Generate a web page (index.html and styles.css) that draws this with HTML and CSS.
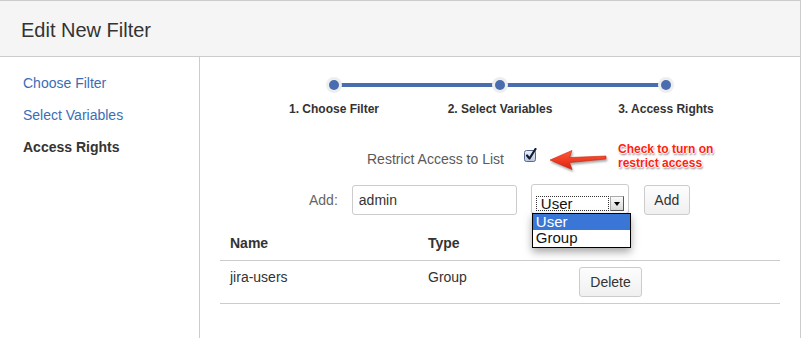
FILE: index.html
```html
<!DOCTYPE html>
<html lang="en">
<head>
    <meta charset="UTF-8">
    <title>Edit New Filter</title>
    <link rel="stylesheet" href="styles.css">
</head>
<body>
    <div class="dialog">
        <div class="dialog-header">
            <h2>Edit New Filter</h2>
        </div>
        <div class="dialog-body">
            <ul class="nav">
                <li><a href="#">Choose Filter</a></li>
                <li><a href="#">Select Variables</a></li>
                <li class="active">Access Rights</li>
            </ul>
            <div class="content">
                <ol class="tracker">
                    <li class="first"><span class="dot"></span><span class="step">1. Choose Filter</span></li>
                    <li><span class="dot"></span><span class="step">2. Select Variables</span></li>
                    <li class="last"><span class="dot"></span><span class="step">3. Access Rights</span></li>
                </ol>

                <div class="restrict-row">
                    <label for="restrict">Restrict Access to List</label>
                    <span class="checkbox" id="restrict">
                        <svg width="13" height="14" viewBox="0 0 13 14">
                            <defs>
                                <linearGradient id="cbg" x1="0" y1="0" x2="0" y2="1">
                                    <stop offset="0" stop-color="#eef2f9"/>
                                    <stop offset="1" stop-color="#b9c6de"/>
                                </linearGradient>
                            </defs>
                            <rect x="0.5" y="2.5" width="11" height="11" rx="2" fill="url(#cbg)" stroke="#56698e"/>
                            <path d="M3 7.5 L5.5 10.5 L11.5 1" fill="none" stroke="#141b33" stroke-width="2.2" stroke-linecap="round" stroke-linejoin="round"/>
                        </svg>
                    </span>
                    <div class="callout">
                        <svg class="arrow" width="58" height="22" viewBox="0 0 58 22">
                            <defs>
                                <linearGradient id="arw" x1="0" y1="0" x2="0" y2="1">
                                    <stop offset="0" stop-color="#ff5a3a"/>
                                    <stop offset="1" stop-color="#e0200e"/>
                                </linearGradient>
                            </defs>
                            <polygon points="1,11 23,1.5 20.5,8.5 57,7 57,10 20.5,13.5 23,20.5" fill="url(#arw)" stroke="#c8240f" stroke-width="0.6"/>
                        </svg>
                        <span class="note">Check to turn on<br>restrict access</span>
                    </div>
                </div>

                <div class="add-row">
                    <label for="user">Add:</label>
                    <input type="text" id="user" class="text" value="admin">
                    <div class="select">
                        <span class="select-value">User</span>
                        <span class="select-arrow"></span>
                        <ul class="select-menu">
                            <li class="selected">User</li>
                            <li>Group</li>
                        </ul>
                    </div>
                    <button class="btn">Add</button>
                </div>

                <table class="rights">
                    <thead>
                        <tr>
                            <th class="col-name">Name</th>
                            <th class="col-type">Type</th>
                            <th></th>
                        </tr>
                    </thead>
                    <tbody>
                        <tr>
                            <td>jira-users</td>
                            <td>Group</td>
                            <td><button class="btn btn-delete">Delete</button></td>
                        </tr>
                    </tbody>
                </table>
            </div>
        </div>
    </div>
</body>
</html>
```

FILE: styles.css
```css
* {
    box-sizing: border-box;
}
body {
    margin: 0;
    font-family: "Liberation Sans", Arial, sans-serif;
    font-size: 14px;
    color: #333;
    background: #fff;
}
.dialog {
    width: 801px;
    height: 338px;
    border-top: 1px solid #ccc;
    border-right: 1px solid #ccc;
    display: flex;
    flex-direction: column;
}
.dialog-header {
    height: 56px;
    background-color: #f5f5f5;
    border-bottom: 1px solid #ccc;
    padding: 17px 21px 0;
}
.dialog-header h2 {
    margin: 0;
    font-size: 20px;
    font-weight: normal;
    line-height: 24px;
    color: #333;
}
.dialog-body {
    flex: 1;
    display: flex;
}
.nav {
    width: 200px;
    margin: 0;
    padding: 16px 0 0 23px;
    list-style: none;
    border-right: 1px solid #ccc;
}
.nav li {
    line-height: 20px;
    margin-bottom: 12px;
}
.nav a {
    color: #3b6db5;
    text-decoration: none;
}
.nav .active {
    font-weight: bold;
    color: #333;
}
.content {
    flex: 1;
    padding: 20px 20px 0;
}

/* progress tracker */
.tracker {
    width: 498px;
    margin: 0 auto;
    padding: 0;
    list-style: none;
    display: flex;
}
.tracker li {
    flex: 1;
    position: relative;
    display: flex;
    flex-direction: column;
    align-items: center;
}
.tracker li::before {
    content: "";
    position: absolute;
    top: 6px;
    left: 0;
    right: 0;
    height: 4px;
    background-color: #4a6db0;
}
.tracker li.first::before {
    left: 50%;
}
.tracker li.last::before {
    right: 50%;
}
.tracker .dot {
    position: relative;
    width: 10px;
    height: 10px;
    margin: 3px 0;
    border-radius: 50%;
    background-color: #4a6db0;
    box-shadow: 0 0 0 3px #eeeeee;
}
.tracker .step {
    margin-top: 9px;
    font-size: 12px;
    line-height: 14px;
    font-weight: bold;
    color: #333;
}

/* restrict row */
.restrict-row {
    position: relative;
    display: flex;
    align-items: flex-start;
    height: 20px;
    margin-top: 33px;
    padding-left: 147px;
    line-height: 20px;
}
.restrict-row label {
    color: #5a5a5a;
}
.checkbox {
    display: block;
    margin-left: 20px;
    margin-top: -2px;
    height: 14px;
}
.callout {
    position: absolute;
    left: 329px;
    top: -7px;
    display: flex;
    align-items: flex-start;
}
.callout .arrow {
    margin-top: 7px;
    filter: drop-shadow(1px 2px 1px rgba(0,0,0,0.35));
}
.note {
    margin-left: 11px;
    font-size: 12px;
    line-height: 14px;
    font-weight: bold;
    color: #ff2211;
    text-shadow: 1px 0 0 #fff, -1px 0 0 #fff, 0 1px 0 #fff, 0 -1px 0 #fff, 1px 2px 2px rgba(0,0,0,0.5);
}

/* add row */
.add-row {
    display: flex;
    align-items: center;
    margin-top: 16px;
    padding-left: 89px;
    height: 30px;
}
.add-row label {
    color: #666;
    margin-right: 14px;
}
.text {
    width: 165px;
    height: 30px;
    padding: 0 6px;
    border: 1px solid #ccc;
    border-radius: 3px;
    font-family: inherit;
    font-size: 14px;
    color: #333;
    margin-right: 14px;
}
.select {
    position: relative;
    width: 98px;
    height: 30px;
    margin-top: -2px;
    border: 1px solid #ccc;
    border-radius: 3px;
    background: #fff;
    box-shadow: 0 1px 1px rgba(0,0,0,0.08);
    display: flex;
    align-items: center;
    padding: 0 4px 0 4px;
    margin-right: 15px;
}
.select-value {
    width: 75px;
    height: 15px;
    margin-top: 8px;
    border: 1px dotted #333;
    line-height: 13px;
    font-size: 15px;
    padding-left: 4px;
    color: #111;
}
.select-arrow {
    position: relative;
    width: 14px;
    height: 15px;
    margin-top: 8px;
    margin-left: 1px;
    background: linear-gradient(#fafafa, #d9d9d9);
    border: 1px solid #aaa;
    border-right-color: #555;
    border-bottom-color: #555;
}
.select-arrow::after {
    content: "";
    position: absolute;
    left: 3px;
    top: 5px;
    border-left: 3px solid transparent;
    border-right: 3px solid transparent;
    border-top: 4px solid #000;
}
.select-menu {
    position: absolute;
    left: 0;
    top: 28px;
    width: 99px;
    margin: 0;
    padding: 0 0 1px;
    list-style: none;
    background: #fff;
    border: 1px solid #000;
    box-shadow: 0 4px 8px rgba(0,0,0,0.35);
    z-index: 2;
}
.select-menu li {
    height: 16px;
    line-height: 16px;
    padding-left: 3px;
    font-size: 15px;
    color: #111;
}
.select-menu li.selected {
    background-color: #3a76d6;
    color: #fff;
}
.btn {
    height: 30px;
    padding: 0 10px;
    border: 1px solid #ccc;
    border-radius: 3px;
    background: linear-gradient(#fdfdfd, #f0f0f0);
    font-family: inherit;
    font-size: 14px;
    color: #333;
}
.add-row .btn {
    width: 46px;
    padding: 0;
}

/* table */
.rights {
    width: 100%;
    margin-top: 12px;
    border-collapse: collapse;
}
.rights th {
    text-align: left;
    font-weight: bold;
    line-height: 20px;
    padding: 6px 10px 7px;
    border-bottom: 1px solid #ccc;
}
.rights td {
    vertical-align: top;
    line-height: 20px;
    padding: 6px 10px;
    border-bottom: 1px solid #ccc;
}
.col-name {
    width: 198px;
}
.col-type {
    width: 151px;
}
.btn-delete {
    width: 63px;
    margin-top: 0;
    padding: 0;
}
```
